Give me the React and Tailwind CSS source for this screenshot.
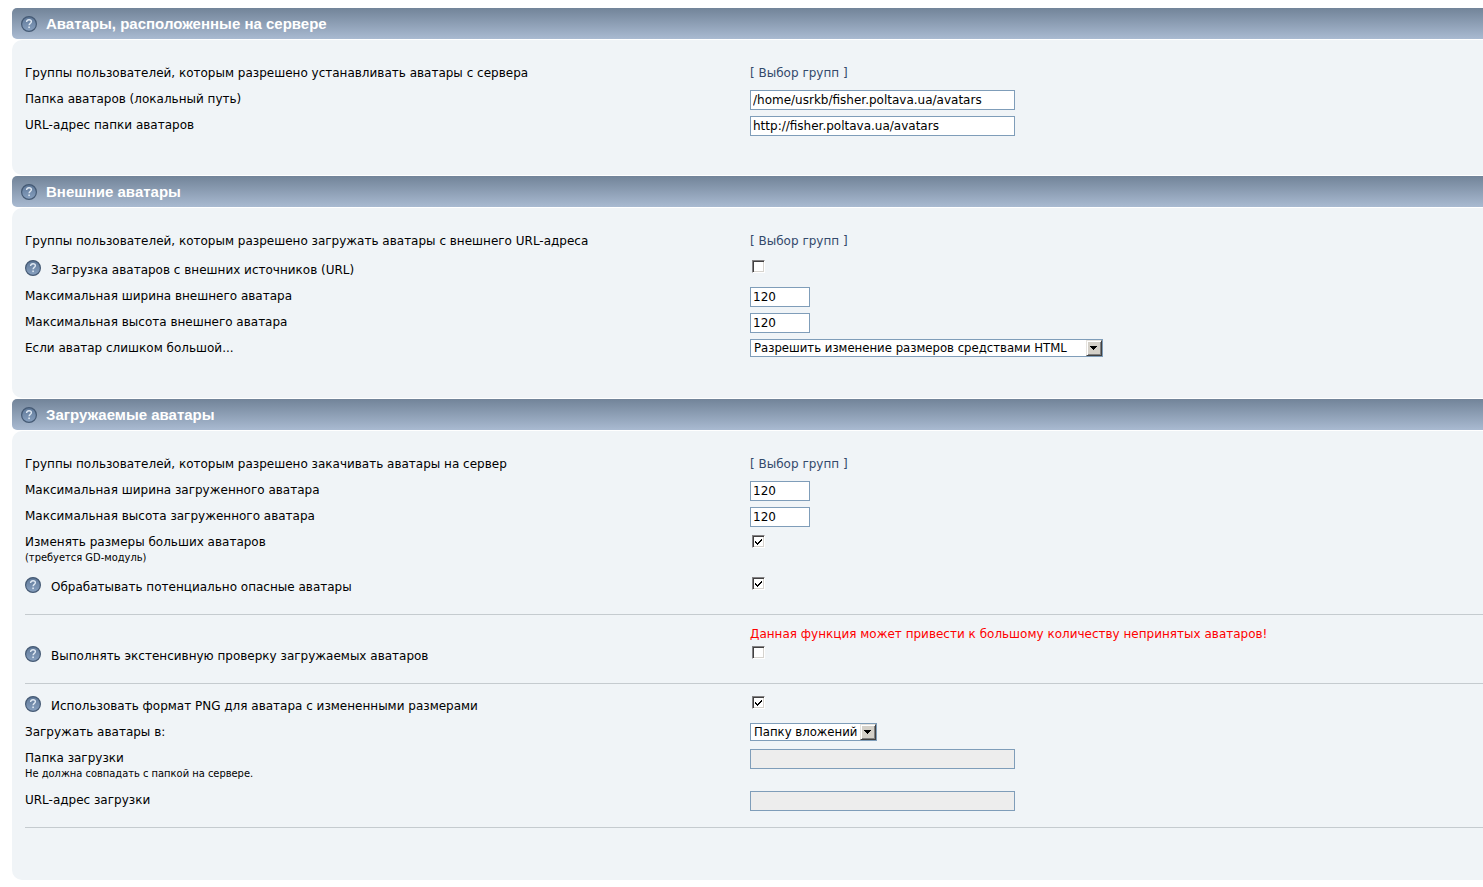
import { useState } from "react";

function HelpIcon() {
    return (
        <svg viewBox="0 0 16 16" className="size-4 shrink-0" aria-hidden="true">
            <defs>
                <linearGradient id="help" x1="0" y1="0" x2="0" y2="1">
                    <stop offset="0" stopColor="#5f7898" />
                    <stop offset="1" stopColor="#88a1c0" />
                </linearGradient>
            </defs>
            <circle cx="8" cy="8" r="7.4" fill="url(#help)" stroke="#455a74" strokeWidth="1.2" />
            <path
                d="M5.6 6.1C5.6 4.6 6.6 3.8 8 3.8s2.4.8 2.4 2c0 1.6-2.3 1.6-2.3 3.4"
                fill="none"
                stroke="#dfe8f2"
                strokeWidth="1.4"
            />
            <rect x="7.3" y="10.5" width="1.6" height="1.6" fill="#dfe8f2" />
        </svg>
    );
}

function Section({ title, children }) {
    return (
        <section className="mb-px">
            <h2 className="flex items-center h-[31px] pl-[9px] gap-[9px] rounded-l-[5px] bg-linear-to-b from-[#728499] to-[#a9bad1] text-white font-bold text-[15px] font-['Liberation_Sans',Arial,sans-serif]">
                <button type="button" aria-label="Справка">
                    <HelpIcon />
                </button>
                {title}
            </h2>
            <div className="mt-px pl-[13px] pt-6 pb-[33px] rounded-l-[10px] bg-[#f0f4f7]">{children}</div>
        </section>
    );
}

function Row({ id, label, note, help, warning, children }) {
    return (
        <div className="grid grid-cols-2 pr-2">
            <div className={warning ? "pt-[19px]" : ""}>
                {help ? (
                    <div className="flex h-[29px] pt-[2px] gap-[10px]">
                        <button type="button" aria-label="Справка" className="h-4">
                            <HelpIcon />
                        </button>
                        <label htmlFor={id} className="leading-5">{label}</label>
                    </div>
                ) : (
                    <div className={note ? "h-[42px] pt-px" : "h-[26px] pt-px"}>
                        <label htmlFor={id} className="block">{label}</label>
                        {note && <p className="text-[11px] font-['DejaVu_Sans_Condensed','DejaVu_Sans',sans-serif]">{note}</p>}
                    </div>
                )}
            </div>
            <div>
                {warning && <p className="pt-px pb-[2px] text-[#ff0000]">{warning}</p>}
                {children}
            </div>
        </div>
    );
}

function TextField({ id, value = "", small, disabled }) {
    const [text, setText] = useState(value);
    return (
        <input
            id={id}
            type="text"
            value={text}
            disabled={disabled}
            onChange={(e) => setText(e.target.value)}
            className={`block h-5 px-[2px] border border-[#7f9db9] bg-white disabled:bg-[#ededed] ${small ? "w-15" : "w-[265px]"}`}
        />
    );
}

function CheckBox({ id, checked = false }) {
    const [on, setOn] = useState(checked);
    return (
        <div className="grid size-[13px] mt-[2px] ml-[2px]">
            <input
                id={id}
                type="checkbox"
                checked={on}
                onChange={(e) => setOn(e.target.checked)}
                className="peer col-start-1 row-start-1 appearance-none size-[13px] bg-white border border-t-[#848284] border-l-[#848284] border-r-white border-b-white shadow-[inset_1px_1px_0_#424142,inset_-1px_-1px_0_#d6d3ce]"
            />
            <svg viewBox="0 0 13 13" className="hidden peer-checked:block col-start-1 row-start-1 size-[13px] pointer-events-none">
                <path d="M3 6h1v1h1v1h1V7h1V6h1V5h1V4h1v2H9v1H8v1H7v1H6v1H5V9H4V8H3z" fill="#000" shapeRendering="crispEdges" />
            </svg>
        </div>
    );
}

function SelectBox({ id, option, width }) {
    return (
        <div className={`grid h-[18px] ${width}`}>
            <select
                id={id}
                className="col-start-1 row-start-1 appearance-none h-[18px] pl-[3px] border border-[#7f9db9] bg-white text-[13px] font-['DejaVu_Sans_Condensed','DejaVu_Sans',sans-serif]"
            >
                <option>{option}</option>
            </select>
            <span className="col-start-1 row-start-1 justify-self-end self-center mr-px flex items-center justify-center size-4 bg-[#d4d0c8] border border-t-[#e6e3de] border-l-[#e6e3de] border-r-[#404040] border-b-[#404040] shadow-[inset_1px_1px_0_#fff,inset_-1px_-1px_0_#808080] pointer-events-none">
                <svg viewBox="0 0 8 4" className="w-2 h-1">
                    <path d="M0 0h7v1H6v1H5v1H4v1H3V3H2V2H1V1H0z" fill="#000" shapeRendering="crispEdges" />
                </svg>
            </span>
        </div>
    );
}

function GroupLink() {
    return <a href="#groups" className="inline-block pt-px text-[#33496b] hover:underline">[ Выбор групп ]</a>;
}

function Divider() {
    return <hr className="my-[10px] border-t border-[#c5cbcf]" />;
}

export default function App() {
    return (
        <form className="pl-3 pt-2 text-[12px] leading-4 text-black bg-white font-['DejaVu_Sans',Verdana,sans-serif]">
            <Section title="Аватары, расположенные на сервере">
                <Row label="Группы пользователей, которым разрешено устанавливать аватары с сервера">
                    <GroupLink />
                </Row>
                <Row id="local-path" label="Папка аватаров (локальный путь)">
                    <TextField id="local-path" value="/home/usrkb/fisher.poltava.ua/avatars" />
                </Row>
                <Row id="local-url" label="URL-адрес папки аватаров">
                    <TextField id="local-url" value="http://fisher.poltava.ua/avatars" />
                </Row>
            </Section>

            <Section title="Внешние аватары">
                <Row label="Группы пользователей, которым разрешено загружать аватары с внешнего URL-адреса">
                    <GroupLink />
                </Row>
                <Row id="ext-download" help label="Загрузка аватаров с внешних источников (URL)">
                    <CheckBox id="ext-download" />
                </Row>
                <Row id="ext-width" label="Максимальная ширина внешнего аватара">
                    <TextField id="ext-width" value="120" small />
                </Row>
                <Row id="ext-height" label="Максимальная высота внешнего аватара">
                    <TextField id="ext-height" value="120" small />
                </Row>
                <Row id="ext-large" label="Если аватар слишком большой...">
                    <SelectBox id="ext-large" option="Разрешить изменение размеров средствами HTML" width="w-[353px]" />
                </Row>
            </Section>

            <Section title="Загружаемые аватары">
                <Row label="Группы пользователей, которым разрешено закачивать аватары на сервер">
                    <GroupLink />
                </Row>
                <Row id="up-width" label="Максимальная ширина загруженного аватара">
                    <TextField id="up-width" value="120" small />
                </Row>
                <Row id="up-height" label="Максимальная высота загруженного аватара">
                    <TextField id="up-height" value="120" small />
                </Row>
                <Row id="up-resize" label="Изменять размеры больших аватаров" note="(требуется GD-модуль)">
                    <CheckBox id="up-resize" checked />
                </Row>
                <Row id="up-reencode" help label="Обрабатывать потенциально опасные аватары">
                    <CheckBox id="up-reencode" checked />
                </Row>
                <Divider />
                <Row
                    id="up-paranoid"
                    help
                    label="Выполнять экстенсивную проверку загружаемых аватаров"
                    warning="Данная функция может привести к большому количеству непринятых аватаров!"
                >
                    <CheckBox id="up-paranoid" />
                </Row>
                <Divider />
                <Row id="up-png" help label="Использовать формат PNG для аватара с измененными размерами">
                    <CheckBox id="up-png" checked />
                </Row>
                <Row id="up-target" label="Загружать аватары в:">
                    <SelectBox id="up-target" option="Папку вложений" width="w-[127px]" />
                </Row>
                <Row id="up-dir" label="Папка загрузки" note="Не должна совпадать с папкой на сервере.">
                    <TextField id="up-dir" disabled />
                </Row>
                <Row id="up-url" label="URL-адрес загрузки">
                    <TextField id="up-url" disabled />
                </Row>
                <Divider />
                <div className="h-[9px]" />
            </Section>
        </form>
    );
}
